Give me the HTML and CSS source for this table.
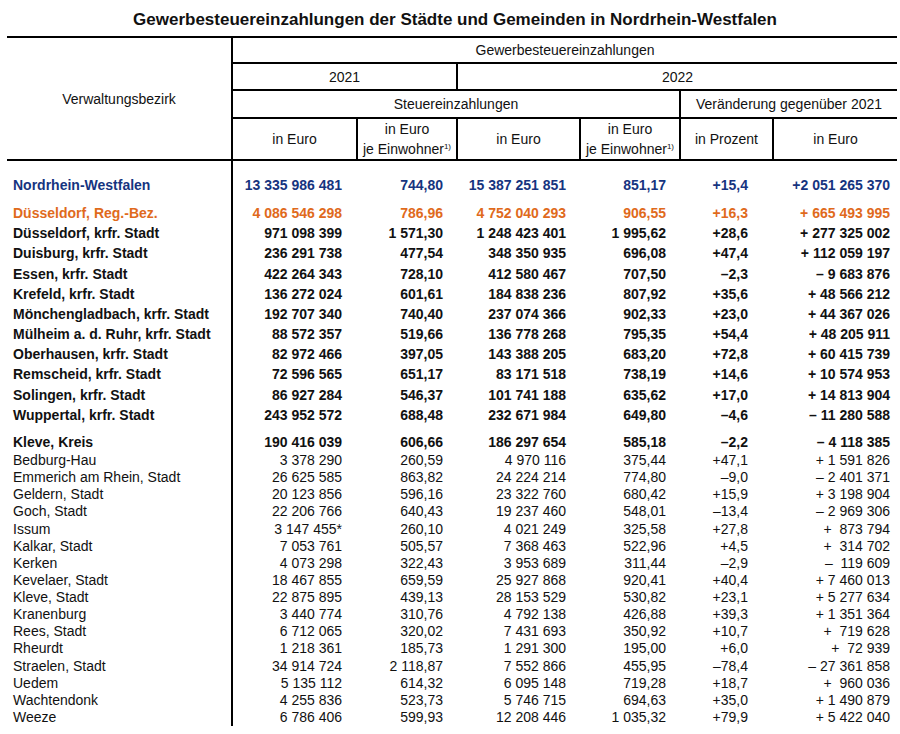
FILE: index.html
```html
<!DOCTYPE html>
<html lang="de">
<head>
<meta charset="utf-8">
<title>Gewerbesteuereinzahlungen NRW</title>
<link rel="stylesheet" href="styles.css">
</head>
<body>
<h1 class="title">Gewerbesteuereinzahlungen der Städte und Gemeinden in Nordrhein-Westfalen</h1>
<table class="tbl">
<colgroup>
<col class="c0"><col class="c1"><col class="c2"><col class="c3"><col class="c4"><col class="c5"><col class="c6">
</colgroup>
<thead>
<tr class="h1"><th rowspan="4" class="lab">Verwaltungsbezirk</th><th colspan="6">Gewerbesteuereinzahlungen</th></tr>
<tr class="h2"><th colspan="2">2021</th><th colspan="4">2022</th></tr>
<tr class="h3"><th colspan="4">Steuereinzahlungen</th><th colspan="2">Veränderung gegenüber 2021</th></tr>
<tr class="h4"><th>in Euro</th><th class="two">in Euro<br>je Einwohner<sup>1)</sup></th><th>in Euro</th><th class="two">in Euro<br>je Einwohner<sup>1)</sup></th><th>in Prozent</th><th>in Euro</th></tr>
</thead>
<tbody>
<tr class="b blue first"><td>Nordrhein-Westfalen</td><td>13 335 986 481</td><td>744,80</td><td>15 387 251 851</td><td>851,17</td><td>+15,4</td><td>+2 051 265 370</td></tr>
<tr class="b orange sep1"><td>Düsseldorf, Reg.-Bez.</td><td>4 086 546 298</td><td>786,96</td><td>4 752 040 293</td><td>906,55</td><td>+16,3</td><td>+ 665 493 995</td></tr>
<tr class="b"><td>Düsseldorf, krfr. Stadt</td><td>971 098 399</td><td>1 571,30</td><td>1 248 423 401</td><td>1 995,62</td><td>+28,6</td><td>+ 277 325 002</td></tr>
<tr class="b"><td>Duisburg, krfr. Stadt</td><td>236 291 738</td><td>477,54</td><td>348 350 935</td><td>696,08</td><td>+47,4</td><td>+ 112 059 197</td></tr>
<tr class="b"><td>Essen, krfr. Stadt</td><td>422 264 343</td><td>728,10</td><td>412 580 467</td><td>707,50</td><td>–2,3</td><td>– 9 683 876</td></tr>
<tr class="b"><td>Krefeld, krfr. Stadt</td><td>136 272 024</td><td>601,61</td><td>184 838 236</td><td>807,92</td><td>+35,6</td><td>+ 48 566 212</td></tr>
<tr class="b"><td>Mönchengladbach, krfr. Stadt</td><td>192 707 340</td><td>740,40</td><td>237 074 366</td><td>902,33</td><td>+23,0</td><td>+ 44 367 026</td></tr>
<tr class="b"><td>Mülheim a. d. Ruhr, krfr. Stadt</td><td>88 572 357</td><td>519,66</td><td>136 778 268</td><td>795,35</td><td>+54,4</td><td>+ 48 205 911</td></tr>
<tr class="b"><td>Oberhausen, krfr. Stadt</td><td>82 972 466</td><td>397,05</td><td>143 388 205</td><td>683,20</td><td>+72,8</td><td>+ 60 415 739</td></tr>
<tr class="b"><td>Remscheid, krfr. Stadt</td><td>72 596 565</td><td>651,17</td><td>83 171 518</td><td>738,19</td><td>+14,6</td><td>+ 10 574 953</td></tr>
<tr class="b"><td>Solingen, krfr. Stadt</td><td>86 927 284</td><td>546,37</td><td>101 741 188</td><td>635,62</td><td>+17,0</td><td>+ 14 813 904</td></tr>
<tr class="b"><td>Wuppertal, krfr. Stadt</td><td>243 952 572</td><td>688,48</td><td>232 671 984</td><td>649,80</td><td>–4,6</td><td>– 11 280 588</td></tr>
<tr class="b sep2"><td>Kleve, Kreis</td><td>190 416 039</td><td>606,66</td><td>186 297 654</td><td>585,18</td><td>–2,2</td><td>– 4 118 385</td></tr>
<tr class="n"><td>Bedburg-Hau</td><td>3 378 290</td><td>260,59</td><td>4 970 116</td><td>375,44</td><td>+47,1</td><td>+ 1 591 826</td></tr>
<tr class="n"><td>Emmerich am Rhein, Stadt</td><td>26 625 585</td><td>863,82</td><td>24 224 214</td><td>774,80</td><td>–9,0</td><td>– 2 401 371</td></tr>
<tr class="n"><td>Geldern, Stadt</td><td>20 123 856</td><td>596,16</td><td>23 322 760</td><td>680,42</td><td>+15,9</td><td>+ 3 198 904</td></tr>
<tr class="n"><td>Goch, Stadt</td><td>22 206 766</td><td>640,43</td><td>19 237 460</td><td>548,01</td><td>–13,4</td><td>– 2 969 306</td></tr>
<tr class="n"><td>Issum</td><td>3 147 455*</td><td>260,10</td><td>4 021 249</td><td>325,58</td><td>+27,8</td><td>+  873 794</td></tr>
<tr class="n"><td>Kalkar, Stadt</td><td>7 053 761</td><td>505,57</td><td>7 368 463</td><td>522,96</td><td>+4,5</td><td>+  314 702</td></tr>
<tr class="n"><td>Kerken</td><td>4 073 298</td><td>322,43</td><td>3 953 689</td><td>311,44</td><td>–2,9</td><td>–  119 609</td></tr>
<tr class="n"><td>Kevelaer, Stadt</td><td>18 467 855</td><td>659,59</td><td>25 927 868</td><td>920,41</td><td>+40,4</td><td>+ 7 460 013</td></tr>
<tr class="n"><td>Kleve, Stadt</td><td>22 875 895</td><td>439,13</td><td>28 153 529</td><td>530,82</td><td>+23,1</td><td>+ 5 277 634</td></tr>
<tr class="n"><td>Kranenburg</td><td>3 440 774</td><td>310,76</td><td>4 792 138</td><td>426,88</td><td>+39,3</td><td>+ 1 351 364</td></tr>
<tr class="n"><td>Rees, Stadt</td><td>6 712 065</td><td>320,02</td><td>7 431 693</td><td>350,92</td><td>+10,7</td><td>+  719 628</td></tr>
<tr class="n"><td>Rheurdt</td><td>1 218 361</td><td>185,73</td><td>1 291 300</td><td>195,00</td><td>+6,0</td><td>+  72 939</td></tr>
<tr class="n"><td>Straelen, Stadt</td><td>34 914 724</td><td>2 118,87</td><td>7 552 866</td><td>455,95</td><td>–78,4</td><td>– 27 361 858</td></tr>
<tr class="n"><td>Uedem</td><td>5 135 112</td><td>614,32</td><td>6 095 148</td><td>719,28</td><td>+18,7</td><td>+  960 036</td></tr>
<tr class="n"><td>Wachtendonk</td><td>4 255 836</td><td>523,73</td><td>5 746 715</td><td>694,63</td><td>+35,0</td><td>+ 1 490 879</td></tr>
<tr class="n"><td>Weeze</td><td>6 786 406</td><td>599,93</td><td>12 208 446</td><td>1 035,32</td><td>+79,9</td><td>+ 5 422 040</td></tr>
</tbody>
</table>
</body>
</html>
```

FILE: styles.css
```css
html, body {
  margin: 0;
  padding: 0;
  background: #ffffff;
}
body {
  font-family: "Liberation Sans", Arial, sans-serif;
  color: #000;
  width: 900px;
}
.title {
  margin: 0;
  padding: 10px 0 6px 10px;
  font-size: 17px;
  line-height: 20px;
  font-weight: bold;
  text-align: center;
  color: #111;
}
.tbl {
  margin-left: 7px;
  width: 890px;
  table-layout: fixed;
  border-collapse: collapse;
  font-size: 14px;
}
.c0 { width: 225px; }
.c1 { width: 125px; }
.c2 { width: 100px; }
.c3 { width: 123px; }
.c4 { width: 100px; }
.c5 { width: 93px; }
.c6 { width: 124px; }

.tbl thead th {
  font-weight: normal;
  text-align: center;
  vertical-align: middle;
  padding: 0;
  border: 2px solid #000;
  line-height: 16px;
  color: #111;
}
.tbl thead th.lab { border-left: none; }
.tbl thead tr th:last-child { border-right: none; }
.h1 { height: 26px; }
.h2 { height: 27px; }
.h3 { height: 28px; }
.h4 { height: 40px; }
.tbl thead th.two { line-height: 20px; }
.tbl sup {
  font-size: 8px;
  line-height: 0;
  vertical-align: 5px;
}

.tbl tbody td {
  padding: 0;
  white-space: pre;
  text-align: right;
  vertical-align: middle;
}
.tbl tbody td:nth-child(1) {
  text-align: left;
  padding-left: 6px;
  border-right: 2px solid #000;
}
.tbl tbody td:nth-child(2) { padding-right: 15px; }
.tbl tbody td:nth-child(3) { padding-right: 14px; }
.tbl tbody td:nth-child(4) { padding-right: 14px; }
.tbl tbody td:nth-child(5) { padding-right: 14px; }
.tbl tbody td:nth-child(6) { padding-right: 25px; }
.tbl tbody td:nth-child(7) { padding-right: 7px; }

.tbl .b td {
  font-weight: bold;
  line-height: 20.15px;
  color: #111;
}
.tbl .n td {
  line-height: 17.13px;
  color: #111;
}
.tbl .blue td { color: #16347f; }
.tbl .orange td { color: #e06a1c; }
.tbl tbody .first td { padding-top: 14px; }
.tbl tbody .sep1 td { padding-top: 8px; }
.tbl tbody .sep2 td { padding-top: 7px; }
```
